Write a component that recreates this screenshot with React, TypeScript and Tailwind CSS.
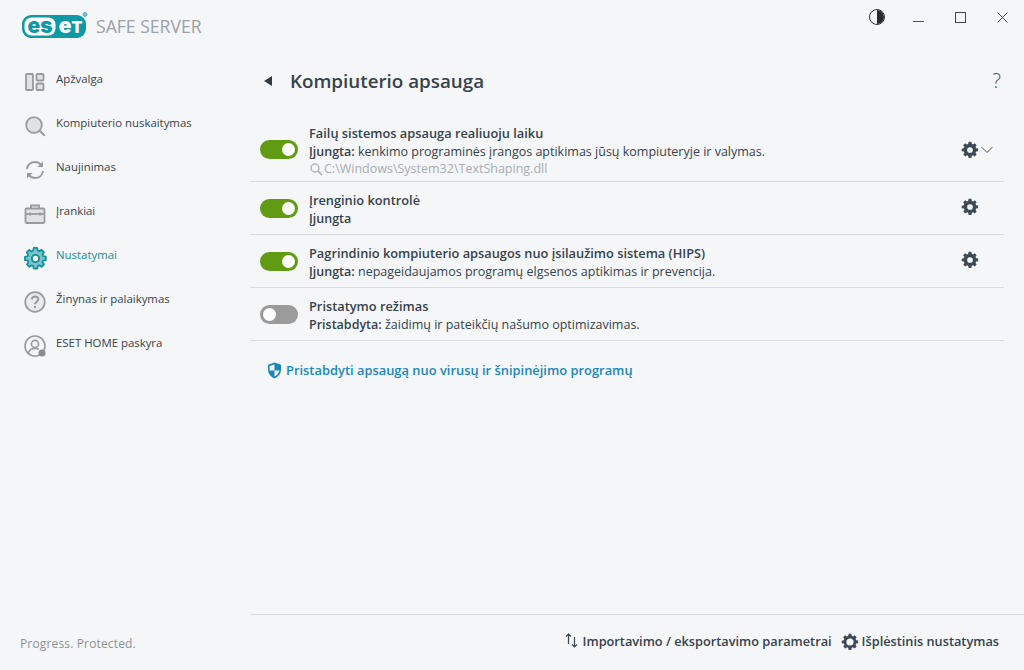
import React from 'react';
import { ChevronDown } from 'lucide-react';

const ui = { fontFamily: '"Open Sans", "Noto Sans", sans-serif' };

const GEAR =
  'M10.2 1h3.6l.5 2.7c.6.2 1.2.4 1.7.8l2.3-1.6 2.6 2.6-1.6 2.3c.3.5.6 1.1.8 1.7l2.7.5v3.6l-2.7.5c-.2.6-.4 1.2-.8 1.7l1.6 2.3-2.6 2.6-2.3-1.6c-.5.3-1.1.6-1.7.8l-.5 2.7h-3.6l-.5-2.7c-.6-.2-1.2-.4-1.7-.8l-2.3 1.6-2.6-2.6 1.6-2.3c-.3-.5-.6-1.1-.8-1.7L1 13.8v-3.6l2.7-.5c.2-.6.4-1.2.8-1.7L2.9 5.7l2.6-2.6 2.3 1.6c.5-.3 1.1-.6 1.7-.8z';

const Gear = ({ size = 16, hole = 3.8 }: { size?: number; hole?: number }) => (
  <svg width={size} height={size} viewBox="0 0 24 24">
    <path d={GEAR} fill="#3d4a55" />
    <circle cx="12" cy="12" r={hole} fill="#f4f6f8" />
  </svg>
);

const Logo = () => (
  <svg width="66" height="26" viewBox="0 0 66 26">
    <rect x="0" y="3" width="64" height="23" rx="9" fill="#0d9aa5" />
    <rect x="2.500" y="5.500" width="31" height="18" rx="7" fill="#fff" />
    <text x="18" y="20.500" textAnchor="middle" fontFamily="Inter, sans-serif" fontWeight="900" fontSize="21" fill="#0d9aa5">es</text>
    <text x="43" y="20.500" textAnchor="middle" fontFamily="Inter, sans-serif" fontWeight="900" fontSize="21" fill="#fff">e</text>
    <text x="55" y="20.500" textAnchor="middle" fontFamily="Inter, sans-serif" fontWeight="900" fontSize="16" fill="#fff">T</text>
    <circle cx="63" cy="2.500" r="2" fill="#7cc4ca" stroke="#0d9aa5" strokeWidth=".6" />
  </svg>
);

const navIcons: Record<string, React.ReactNode> = {
  overview: (
    <svg width="22" height="22" viewBox="0 0 22 22" fill="#e0e2e4" stroke="#9a9a9a" strokeWidth="1.800">
      <rect x="2" y="3" width="7" height="16" rx="1" />
      <rect x="12.500" y="3" width="7" height="6.500" rx="1" />
      <rect x="12.500" y="12.500" width="7" height="6.500" rx="1" />
    </svg>
  ),
  scan: (
    <svg width="22" height="22" viewBox="0 0 22 22" fill="none" stroke="#9a9a9a" strokeWidth="1.800">
      <circle cx="10" cy="10" r="7.800" fill="#e0e2e4" />
      <path d="M15.700 15.700 20 20" strokeWidth="2.200" strokeLinecap="round" />
    </svg>
  ),
  update: (
    <svg width="22" height="22" viewBox="0 0 22 22" fill="none" stroke="#9a9a9a" strokeWidth="2">
      <path d="M3 10C3.500 5.500 7 3 11 3c2.500 0 4.500 1 6 2.800" />
      <path d="M19 12c-.5 4.500-4 7-8 7-2.500 0-4.500-1-6-2.800" />
      <path d="M19 2.500V8h-5.500zM3 19.500V14h5.500z" fill="#9a9a9a" stroke="none" />
    </svg>
  ),
  tools: (
    <svg width="22" height="22" viewBox="0 0 22 22" fill="#e0e2e4" stroke="#9a9a9a" strokeWidth="1.800">
      <rect x="1.500" y="5.500" width="19" height="14.500" rx="1.200" />
      <path d="M7 5.500V2.500h8v3" fill="none" />
      <path d="M1.500 11h19" fill="none" />
      <path d="M6 9.500v3M16 9.500v3" fill="none" />
    </svg>
  ),
  settings: (
    <svg width="23" height="23" viewBox="0 0 24 24">
      <path d={GEAR} fill="#7cc4ca" stroke="#0f8f9b" strokeWidth="1.800" strokeLinejoin="round" />
      <circle cx="12" cy="12" r="3.800" fill="#f4f6f8" stroke="#0f8f9b" strokeWidth="2" />
    </svg>
  ),
  help: (
    <svg width="22" height="22" viewBox="0 0 22 22" fill="none" stroke="#9a9a9a" strokeWidth="1.700">
      <circle cx="11" cy="11" r="9.800" fill="#e9ebed" />
      <path d="M7.800 8.500c.2-2 1.600-3 3.300-3 1.800 0 3.200 1.100 3.200 2.800 0 2.500-3.300 2.500-3.300 5" strokeWidth="2" />
      <circle cx="11" cy="16" r="1.200" fill="#9a9a9a" stroke="none" />
    </svg>
  ),
  home: (
    <svg width="23" height="23" viewBox="0 0 23 23" fill="none" stroke="#9a9a9a" strokeWidth="1.600">
      <circle cx="11" cy="11" r="10" />
      <circle cx="11" cy="9" r="3.600" />
      <path d="M4.500 18c.8-3 3.300-4.500 6.500-4.500 1.500 0 2.800.3 3.800 1" />
      <circle cx="18" cy="18" r="3.500" fill="#8a8a8a" stroke="none" />
    </svg>
  ),
};

const navItems = [
  { key: 'overview', label: 'Apžvalga' },
  { key: 'scan', label: 'Kompiuterio nuskaitymas' },
  { key: 'update', label: 'Naujinimas' },
  { key: 'tools', label: 'Įrankiai' },
  { key: 'settings', label: 'Nustatymai', active: true },
  { key: 'help', label: 'Žinynas ir palaikymas' },
  { key: 'home', label: 'ESET HOME paskyra' },
];

const Toggle = ({ on }: { on: boolean }) => (
  <div className={`w-[38px] h-[19px] -mt-[3px] rounded-full flex items-center px-[3px] shrink-0 ${on ? 'bg-[#619b13] justify-end' : 'bg-[#9b9b9b] justify-start'}`}>
    <div className="w-[13px] h-[13px] rounded-full bg-white" />
  </div>
);

interface RowProps {
  on: boolean;
  title: string;
  status: string;
  desc?: string;
  path?: string;
  gear?: boolean;
  chevron?: boolean;
}

const Row = ({ on, title, status, desc, path, gear, chevron }: RowProps) => (
  <div className={`flex items-center border-b border-[#d8dadc] pl-[10px] ${path ? 'pt-[10px] pb-[4px]' : 'pt-[9px] pb-[6px]'}`}>
    <Toggle on={on} />
    <div className="ml-[11px] flex-1 text-[12.500px] leading-[18px] text-[#36424d]">
      <div className="font-semibold text-[12.800px] leading-[19px]">{title}</div>
      <div>
        <span className="font-semibold">{status}</span>
        {desc ? ` ${desc}` : ''}
      </div>
      {path && (
        <div className="flex items-center text-[#a9adb1] leading-[16px]">
          <svg width="14" height="14" viewBox="0 0 14 14" fill="none" stroke="#b5b8bb" strokeWidth="1.500" className="mr-px">
            <circle cx="6" cy="6" r="4" />
            <path d="M9 9l4 4" strokeWidth="2" />
          </svg>
          {path}
        </div>
      )}
    </div>
    <div className={`w-[44px] h-[20px] flex items-center shrink-0 pl-[1px] ${path ? '-mt-[2px]' : '-mt-[5px]'}`}>
      {gear && <Gear size={18} />}
      {chevron && <ChevronDown size={20} strokeWidth={1.200} className="text-[#3d4a55] -ml-[2px] shrink-0" />}
    </div>
  </div>
);

export default function App() {
  return (
    <div className="w-[1024px] h-[670px] bg-[#f4f6f8] flex overflow-hidden" style={ui}>
      <aside className="w-[250px] shrink-0 flex flex-col">
        <div className="h-[57px] pl-[22px] pt-[12px] flex items-start gap-[8px]">
          <Logo />
          <span className="text-[17.600px] leading-[30px] text-[#9aa0a6] -mt-[1px]">SAFE SERVER</span>
        </div>
        <nav className="flex flex-col">
          {navItems.map(item => (
            <div key={item.key} className="h-[44px] flex items-center pl-[23px]">
              <div className="w-[24px] h-[24px] flex items-center justify-center mt-[6px] shrink-0">{navIcons[item.key]}</div>
              <span className={`ml-[9px] text-[11.400px] -mt-[1px] ${item.active ? 'text-[#0f8f9b]' : 'text-[#36424d]'}`}>{item.label}</span>
            </div>
          ))}
        </nav>
        <div className="mt-auto pl-[20px] pb-[17px] text-[12px] tracking-[0.15px] text-[#8d9195]">Progress. Protected.</div>
      </aside>

      <main className="flex-1 flex flex-col min-w-0">
        <div className="h-[34px] flex justify-end items-center shrink-0 pr-[16px]">
          <div className="w-[16px] h-[16px] rounded-full border border-[#333] overflow-hidden flex justify-end mr-[28px]">
            <div className="w-1/2 bg-[#2b2b2b]" />
          </div>
          <div className="w-[11px] h-px bg-[#555] mt-[9px] mr-[31px]" />
          <div className="w-[11px] h-[11px] border border-[#444] mr-[31px]" />
          <svg width="11" height="11" viewBox="0 0 11 11" stroke="#444" strokeWidth="1">
            <path d="M.5.500l10 10M10.500.500l-10 10" />
          </svg>
        </div>
        <div className="flex items-center mt-[33px] mb-[19px] pl-[14px] pr-[23px] h-[28px] shrink-0">
          <svg width="9" height="10" viewBox="0 0 9 10" fill="#2f3b45" className="mr-[17px]">
            <path d="M8 0v10L0 5z" />
          </svg>
          <h1 className="text-[18.800px] font-semibold text-[#36424d]">Kompiuterio apsauga</h1>
          <span className="ml-auto text-[20px] leading-none text-[#4a5560] font-light">?</span>
        </div>
        <div className="flex flex-col mr-[20px]">
          <Row on title="Failų sistemos apsauga realiuoju laiku" status="Įjungta:" desc="kenkimo programinės įrangos aptikimas jūsų kompiuteryje ir valymas." path="C:\Windows\System32\TextShaping.dll" gear chevron />
          <Row on title="Įrenginio kontrolė" status="Įjungta" gear />
          <Row on title="Pagrindinio kompiuterio apsaugos nuo įsilaužimo sistema (HIPS)" status="Įjungta:" desc="nepageidaujamos programų elgsenos aptikimas ir prevencija." gear />
          <Row on={false} title="Pristatymo režimas" status="Pristabdyta:" desc="žaidimų ir pateikčių našumo optimizavimas." />
        </div>
        <div className="flex items-center pl-[17px] mt-[20px] text-[12.900px] font-semibold text-[#1a87b9]">
          <svg width="15" height="17" viewBox="0 0 15 17" className="mr-[4px]">
            <path d="M7.500.500l6.500 2.300v5c0 4-2.800 7-6.500 8.700C3.800 14.800 1 11.800 1 7.800v-5z" fill="#1a87b9" />
            <path d="M7.500 2.500v6H2.600V4zM7.500 8.500h4.900c-.4 2.600-2.400 4.700-4.900 6z" fill="#f4f6f8" />
          </svg>
          Pristabdyti apsaugą nuo virusų ir šnipinėjimo programų
        </div>
        <div className="mt-auto h-[56px] border-t border-[#d8dadc] flex items-center justify-end pr-[25px] pb-[1px] text-[12.750px] font-semibold text-[#36424d]">
          <svg width="13" height="15" viewBox="0 0 13 15" fill="none" stroke="#36424d" strokeWidth="1.200" className="mr-[5px] -mt-[3px]">
            <path d="M3.500 11V1M1 3.500 3.500 1 6 3.500M9.500 4v10M7 11.500 9.500 14l2.500-2.500" />
          </svg>
          <span>Importavimo / eksportavimo parametrai</span>
          <span className="ml-[9px] mr-[3px] -mt-[1px]"><Gear size={18} hole={4.800} /></span>
          <span>Išplėstinis nustatymas</span>
        </div>
      </main>
    </div>
  );
}
